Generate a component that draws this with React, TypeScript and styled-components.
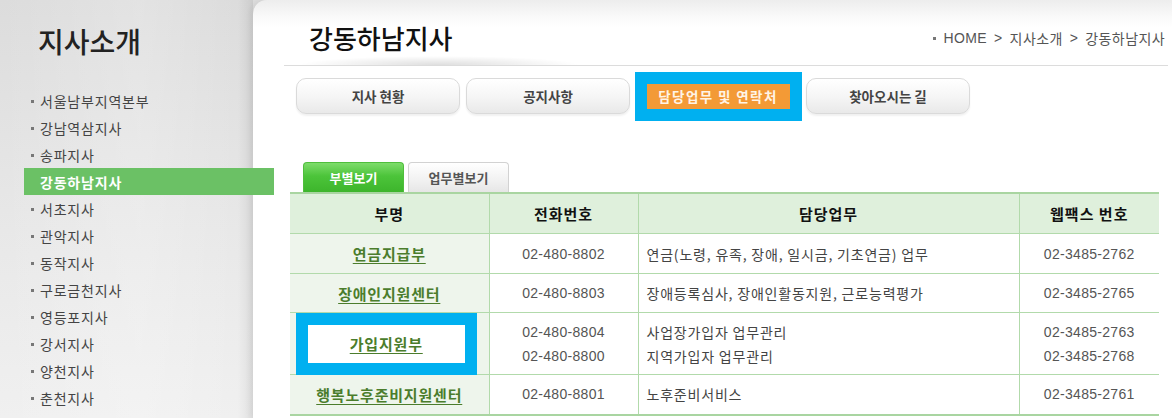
import styled, { createGlobalStyle } from 'styled-components';

const GlobalStyle = createGlobalStyle`
    body {
        margin: 0;
        background: #fff;
        font-family: "Liberation Sans", "Noto Sans CJK KR", sans-serif;
    }
`;

const Page = styled.div`
    display: flex;
    width: 1172px;
    height: 418px;
    overflow: hidden;
    background: linear-gradient(180deg, #dcdcdc 0%, #e8e8e8 55%, #f0f0f0 100%);
`;

const Sidebar = styled.aside`
    position: relative;
    z-index: 1;
    flex: none;
    width: 253px;
    background: linear-gradient(90deg, rgba(255, 255, 255, 0) 0, rgba(255, 255, 255, 0.2) 55%, rgba(0, 0, 0, 0) 94%, rgba(0, 0, 0, 0.07) 100%);
`;

const SideTitle = styled.h2`
    margin: 24px 0 0 38px;
    font-family: "Noto Sans CJK KR", sans-serif;
    font-size: 28px;
    line-height: 34px;
    font-weight: 500;
    color: #222;
`;

const Menu = styled.ul`
    list-style: none;
    margin: 29px 0 0 24px;
    padding: 0;
`;

const MenuItem = styled.li<{ $active?: boolean }>`
    display: flex;
    align-items: center;
    gap: 6px;
    width: 250px;
    height: 27px;
    padding-left: ${({ $active }) => ($active ? '16px' : '7px')};
    box-sizing: border-box;
    font-family: "Noto Sans CJK KR", sans-serif;
    font-size: 14px;
    letter-spacing: 0.8px;
    font-weight: ${({ $active }) => ($active ? 700 : 400)};
    color: ${({ $active }) => ($active ? '#fff' : '#444')};
    background: ${({ $active }) => ($active ? '#6bc165' : 'transparent')};
`;

const Dot = styled.span`
    width: 3px;
    height: 3px;
    margin-top: 2px;
    background: #777;
    flex: none;
`;

const Main = styled.main`
    flex: 1;
    display: flex;
    flex-direction: column;
    border-top-left-radius: 14px;
    background: linear-gradient(180deg, #ededed 0, #f9f9f9 16px, #fff 28px);
    box-shadow: -3px 0 5px rgba(0, 0, 0, 0.05);
`;

const Header = styled.header`
    display: flex;
    align-items: center;
    justify-content: space-between;
    height: 66px;
    padding: 10px 3px 0 25px;
    margin: 0 4px 0 31px;
    box-sizing: border-box;
    border-bottom: 1px solid #dcdcdc;
    background: radial-gradient(ellipse 140px 9px at 155px 100%, rgba(0, 0, 0, 0.13), rgba(0, 0, 0, 0));
`;

const Title = styled.h1`
    margin: 0;
    font-family: "Noto Sans CJK KR", sans-serif;
    font-size: 26px;
    font-weight: 500;
    color: #111;
`;

const Crumbs = styled.nav`
    display: flex;
    align-items: center;
    gap: 7px;
    font-size: 14px;
    letter-spacing: 0.4px;
    color: #555;
`;

const Tabs = styled.div`
    display: flex;
    gap: 6px;
    margin: 12px 0 0 43px;
`;

const TabButton = styled.div<{ $active?: boolean }>`
    display: flex;
    align-items: center;
    justify-content: center;
    width: 164px;
    height: 36px;
    box-sizing: border-box;
    border-radius: 10px;
    border: 1px solid ${({ $active }) => ($active ? '#f0962e' : '#dadada')};
    background: ${({ $active }) => ($active
        ? 'linear-gradient(180deg, #f8ad55 0%, #ef8f27 100%)'
        : 'linear-gradient(180deg, #ffffff 0%, #f6f6f6 50%, #e9e9e9 100%)')};
    box-shadow: 0 2px 2px rgba(0, 0, 0, 0.06);
    font-family: "Noto Sans CJK KR", sans-serif;
    font-size: 13.5px;
    font-weight: 700;
    color: #444;
`;

const ActiveLabel = styled.span`
    display: inline-block;
    width: 143px;
    line-height: 25px;
    text-align: center;
    background: #f39a36;
    color: #fff4e6;
    letter-spacing: 1.4px;
    box-shadow: 0 0 0 12px #00b0f0;
`;

const Content = styled.section`
    margin: 48px 0 0 37px;
    width: 869px;
`;

const SubTabs = styled.div`
    display: flex;
    gap: 4px;
    margin-left: 13px;
`;

const SubTab = styled.div<{ $active?: boolean }>`
    display: flex;
    align-items: center;
    justify-content: center;
    width: 101px;
    height: 30px;
    box-sizing: border-box;
    border-radius: 4px 4px 0 0;
    border: 1px solid ${({ $active }) => ($active ? '#4fbe3c' : '#d2d2d2')};
    border-bottom: none;
    background: ${({ $active }) => ($active
        ? 'linear-gradient(180deg, #7ddc6a 0%, #4cc43a 45%, #3db52c 100%)'
        : 'linear-gradient(180deg, #ffffff 0%, #f1f1f1 60%, #e6e6e6 100%)')};
    font-family: "Noto Sans CJK KR", sans-serif;
    font-size: 13px;
    font-weight: 700;
    color: ${({ $active }) => ($active ? '#fff' : '#555')};
`;

const Table = styled.table`
    width: 869px;
    table-layout: fixed;
    border-collapse: collapse;
    border-top: 2px solid #a9d5a1;
    border-bottom: 2px solid #a9d5a1;
`;

const Th = styled.th`
    height: 39px;
    padding: 0;
    background: #dff0dc;
    border-right: 1px solid #b2daab;
    border-bottom: 1px solid #b2daab;
    font-family: "Noto Sans CJK KR", sans-serif;
    font-size: 15px;
    font-weight: 700;
    letter-spacing: 1px;
    color: #111;
    &:last-child { border-right: none; }
`;

const Td = styled.td<{ $align?: 'left' | 'center', $name?: boolean }>`
    padding: 0 ${({ $align }) => ($align === 'left' ? '8px' : '0')};
    text-align: ${({ $align }) => $align ?? 'center'};
    background: ${({ $name }) => ($name ? '#eef5ec' : '#fff')};
    border-right: 1px solid #b2daab;
    border-bottom: 1px solid #b2daab;
    font-family: "Noto Sans CJK KR", sans-serif;
    font-size: 14px;
    letter-spacing: 0.8px;
    color: #444;
    &:last-child { border-right: none; }
`;

const Phone = styled.div`
    font-family: "Liberation Sans", sans-serif;
    font-size: 14px;
    letter-spacing: 0.3px;
    line-height: 24px;
    color: #555;
`;

const Line = styled.div`
    line-height: 24px;
`;

const DeptLink = styled.a`
    font-size: 15px;
    font-weight: 700;
    color: #4b7d2c;
    text-decoration: underline;
    text-underline-offset: 3px;
`;

const Marked = styled.span`
    display: inline-block;
    width: 157px;
    line-height: 37px;
    margin-left: -6px;
    background: #fff;
    box-shadow: 0 0 0 12px #00b0f0;
`;

type Row = {
    name: string
    phones: string[]
    duties: string[]
    faxes: string[]
    height: number
    marked?: boolean
}

const branches = ['서울남부지역본부', '강남역삼지사', '송파지사', '강동하남지사', '서초지사', '관악지사', '동작지사',
    '구로금천지사', '영등포지사', '강서지사', '양천지사', '춘천지사'];

const rows: Row[] = [
    { name: '연금지급부', phones: ['02-480-8802'], duties: ['연금(노령, 유족, 장애, 일시금, 기초연금) 업무'], faxes: ['02-3485-2762'], height: 40 },
    { name: '장애인지원센터', phones: ['02-480-8803'], duties: ['장애등록심사, 장애인활동지원, 근로능력평가'], faxes: ['02-3485-2765'], height: 39 },
    { name: '가입지원부', phones: ['02-480-8804', '02-480-8800'], duties: ['사업장가입자 업무관리', '지역가입자 업무관리'], faxes: ['02-3485-2763', '02-3485-2768'], height: 62, marked: true },
    { name: '행복노후준비지원센터', phones: ['02-480-8801'], duties: ['노후준비서비스'], faxes: ['02-3485-2761'], height: 40 }
];

export default function App() {
    return (
        <Page>
            <GlobalStyle />
            <Sidebar>
                <SideTitle>지사소개</SideTitle>
                <Menu>
                    {branches.map(b => b === '강동하남지사'
                        ? <MenuItem key={b} $active>{b}</MenuItem>
                        : <MenuItem key={b}><Dot />{b}</MenuItem>)}
                </Menu>
            </Sidebar>
            <Main>
                <Header>
                    <Title>강동하남지사</Title>
                    <Crumbs>
                        <Dot />
                        <span>HOME</span>
                        <span>&gt;</span>
                        <span>지사소개</span>
                        <span>&gt;</span>
                        <span>강동하남지사</span>
                    </Crumbs>
                </Header>
                <Tabs>
                    <TabButton>지사 현황</TabButton>
                    <TabButton>공지사항</TabButton>
                    <TabButton $active><ActiveLabel>담당업무 및 연락처</ActiveLabel></TabButton>
                    <TabButton>찾아오시는 길</TabButton>
                </Tabs>
                <Content>
                    <SubTabs>
                        <SubTab $active>부별보기</SubTab>
                        <SubTab>업무별보기</SubTab>
                    </SubTabs>
                    <Table>
                        <colgroup>
                            <col style={{ width: 199 }} />
                            <col style={{ width: 149 }} />
                            <col style={{ width: 381 }} />
                            <col style={{ width: 140 }} />
                        </colgroup>
                        <thead>
                            <tr>
                                <Th>부명</Th>
                                <Th>전화번호</Th>
                                <Th>담당업무</Th>
                                <Th>웹팩스 번호</Th>
                            </tr>
                        </thead>
                        <tbody>
                            {rows.map(r => (
                                <tr key={r.name} style={{ height: r.height }}>
                                    <Td $name>
                                        {r.marked
                                            ? <Marked><DeptLink>{r.name}</DeptLink></Marked>
                                            : <DeptLink>{r.name}</DeptLink>}
                                    </Td>
                                    <Td>{r.phones.map(p => <Phone key={p}>{p}</Phone>)}</Td>
                                    <Td $align='left'>{r.duties.map(d => <Line key={d}>{d}</Line>)}</Td>
                                    <Td>{r.faxes.map(f => <Phone key={f}>{f}</Phone>)}</Td>
                                </tr>
                            ))}
                        </tbody>
                    </Table>
                </Content>
            </Main>
        </Page>
    );
}
